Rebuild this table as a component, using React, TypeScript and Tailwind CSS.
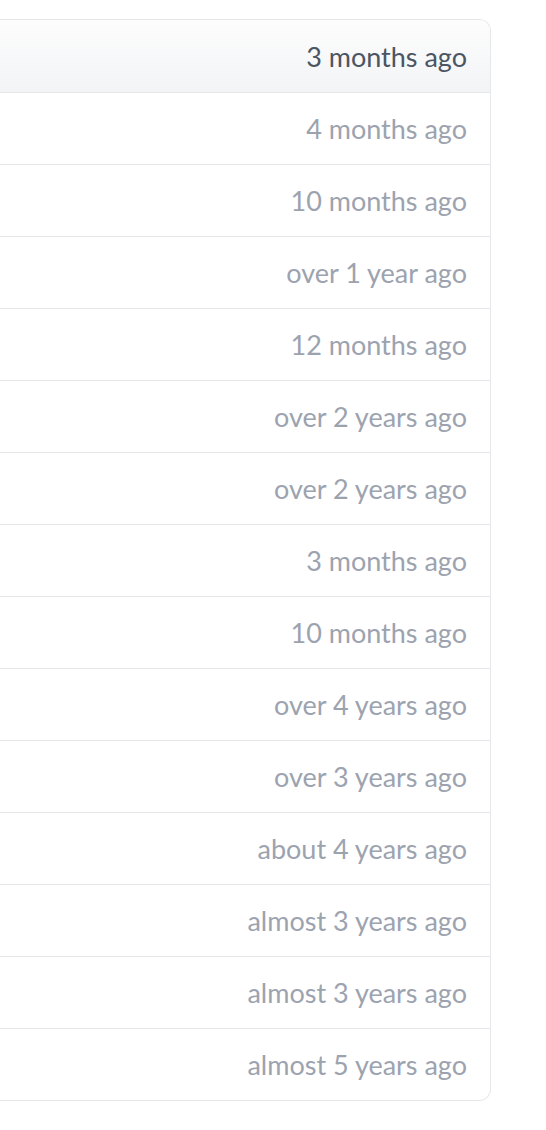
const rows = [
  '4 months ago',
  '10 months ago',
  'over 1 year ago',
  '12 months ago',
  'over 2 years ago',
  'over 2 years ago',
  '3 months ago',
  '10 months ago',
  'over 4 years ago',
  'over 3 years ago',
  'about 4 years ago',
  'almost 3 years ago',
  'almost 3 years ago',
  'almost 5 years ago',
];

export default function App() {
  return (
    <div
      className="min-h-screen bg-white pt-[19px]"
      style={{ fontFamily: 'Lato, "Open Sans", sans-serif' }}
    >
      <div className="w-[491px] overflow-hidden rounded-r-[12px] border-y border-r border-[#e5e7eb]">
        <div className="flex h-[73px] items-center justify-end border-b border-[#e5e7eb] bg-gradient-to-b from-[#fdfdfd] to-[#f3f4f6] pt-[2px] pr-[23px] text-[27px] text-[#4b5563]">
          3 months ago
        </div>
        {rows.map((label, i) => (
          <div
            key={i}
            className={`flex items-center justify-end pt-[2px] pr-[23px] text-[27px] text-[#9ca3af] ${
              i < rows.length - 1 ? 'h-[72px] border-b border-[#e5e7eb]' : 'h-[71px]'
            }`}
          >
            {label}
          </div>
        ))}
      </div>
    </div>
  );
}
